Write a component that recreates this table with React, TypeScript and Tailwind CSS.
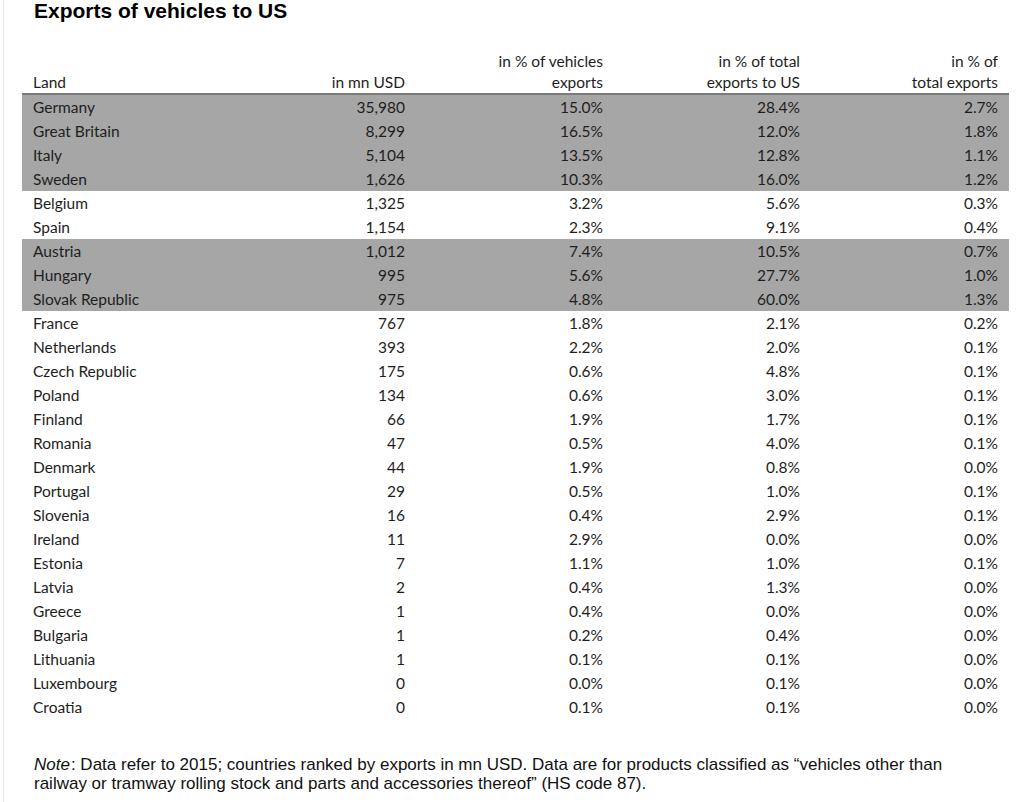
import React from "react";

type Row = [string, string, string, string, string, boolean];

const rows: Row[] = [
  ["Germany", "35,980", "15.0%", "28.4%", "2.7%", true],
  ["Great Britain", "8,299", "16.5%", "12.0%", "1.8%", true],
  ["Italy", "5,104", "13.5%", "12.8%", "1.1%", true],
  ["Sweden", "1,626", "10.3%", "16.0%", "1.2%", true],
  ["Belgium", "1,325", "3.2%", "5.6%", "0.3%", false],
  ["Spain", "1,154", "2.3%", "9.1%", "0.4%", false],
  ["Austria", "1,012", "7.4%", "10.5%", "0.7%", true],
  ["Hungary", "995", "5.6%", "27.7%", "1.0%", true],
  ["Slovak Republic", "975", "4.8%", "60.0%", "1.3%", true],
  ["France", "767", "1.8%", "2.1%", "0.2%", false],
  ["Netherlands", "393", "2.2%", "2.0%", "0.1%", false],
  ["Czech Republic", "175", "0.6%", "4.8%", "0.1%", false],
  ["Poland", "134", "0.6%", "3.0%", "0.1%", false],
  ["Finland", "66", "1.9%", "1.7%", "0.1%", false],
  ["Romania", "47", "0.5%", "4.0%", "0.1%", false],
  ["Denmark", "44", "1.9%", "0.8%", "0.0%", false],
  ["Portugal", "29", "0.5%", "1.0%", "0.1%", false],
  ["Slovenia", "16", "0.4%", "2.9%", "0.1%", false],
  ["Ireland", "11", "2.9%", "0.0%", "0.0%", false],
  ["Estonia", "7", "1.1%", "1.0%", "0.1%", false],
  ["Latvia", "2", "0.4%", "1.3%", "0.0%", false],
  ["Greece", "1", "0.4%", "0.0%", "0.0%", false],
  ["Bulgaria", "1", "0.2%", "0.4%", "0.0%", false],
  ["Lithuania", "1", "0.1%", "0.1%", "0.0%", false],
  ["Luxembourg", "0", "0.0%", "0.1%", "0.0%", false],
  ["Croatia", "0", "0.1%", "0.1%", "0.0%", false],
];

const cols = "grid grid-cols-[197px_197px_198px_197px_198px]";

export default function App() {
  return (
    <div className="flex min-h-[802px] w-[1019px] bg-white">
      <div className="w-[3px]" />
      <div className="w-px bg-[#e8e8e8]" />
      <div className="flex flex-col">
        <h1
          className="ml-[30px] text-[21px] font-bold leading-[22px] text-black"
          style={{ fontFamily: '"Liberation Sans", Arial, sans-serif' }}
        >
          Exports of vehicles to US
        </h1>

        <div
          className="ml-[18px] mt-[29px] w-[987px] text-[15.5px] text-[#1e1e1e]"
          style={{ fontFamily: 'Lato, "Open Sans", sans-serif' }}
        >
          <div className={`${cols} border-b-2 border-[#7a7a7a] leading-[21px]`}>
            <div className="flex items-end px-[11px]">Land</div>
            <div className="flex items-end justify-end px-[11px] text-right">in mn USD</div>
            <div className="px-[11px] text-right">
              in % of vehicles
              <br />
              exports
            </div>
            <div className="px-[11px] text-right">
              in % of total
              <br />
              exports to US
            </div>
            <div className="px-[11px] text-right">
              in % of
              <br />
              total exports
            </div>
          </div>
          {rows.map((r) => (
            <div
              key={r[0]}
              className={`${cols} h-[24px] pt-[1px] leading-[23px] ${r[5] ? "bg-[#a6a6a6]" : ""}`}
            >
              <div className="px-[11px]">{r[0]}</div>
              <div className="px-[11px] text-right">{r[1]}</div>
              <div className="px-[11px] text-right">{r[2]}</div>
              <div className="px-[11px] text-right">{r[3]}</div>
              <div className="px-[11px] text-right">{r[4]}</div>
            </div>
          ))}
        </div>

        <p
          className="ml-[30px] mt-[36px] w-[930px] text-[17px] leading-[19px] text-[#111]"
          style={{ fontFamily: '"Liberation Sans", Arial, sans-serif' }}
        >
          <i className="pr-[1px]">Note</i>: Data refer to 2015; countries ranked by exports in mn USD. Data are for
          products classified as “vehicles other than railway or tramway rolling stock and parts and accessories
          thereof” (HS code 87).
        </p>
      </div>
    </div>
  );
}
